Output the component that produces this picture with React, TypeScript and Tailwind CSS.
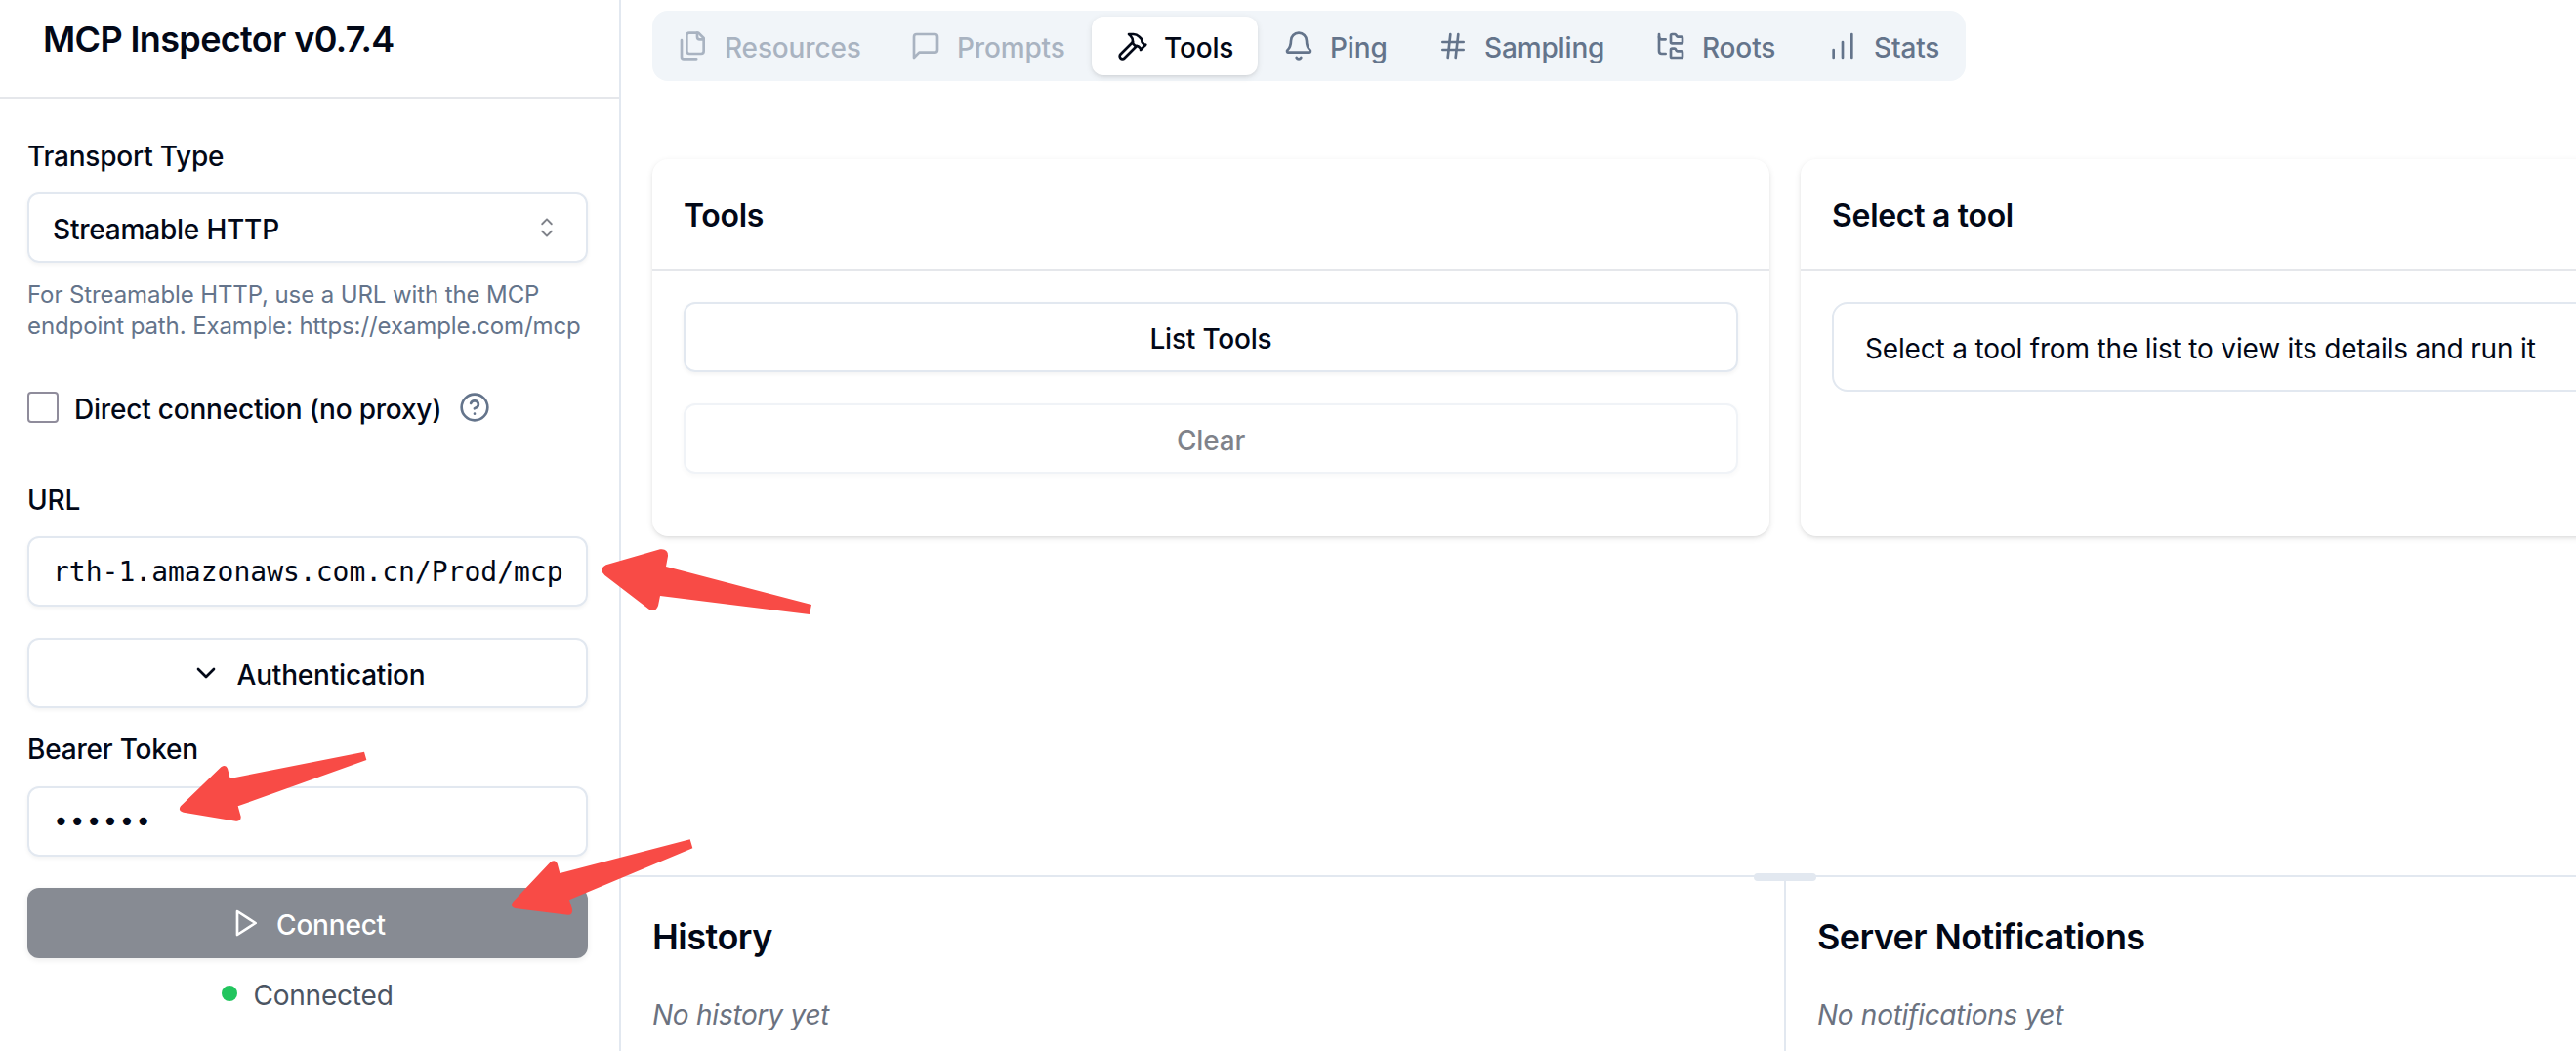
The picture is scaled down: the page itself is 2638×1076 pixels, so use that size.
import type { ReactNode } from 'react';
import {
  Bell,
  ChartNoAxesColumnIncreasing,
  ChevronDown,
  CircleHelp,
  FolderTree,
  Hammer,
  Hash,
} from 'lucide-react';

const stroke = {
  viewBox: '0 0 24 24',
  fill: 'none',
  stroke: 'currentColor',
  strokeWidth: 2,
  strokeLinecap: 'round' as const,
  strokeLinejoin: 'round' as const,
};

function FilesIcon() {
  return (
    <svg {...stroke} className="size-8 shrink-0">
      <path d="M20 7h-3a2 2 0 0 1-2-2V2" />
      <path d="M9 18a2 2 0 0 1-2-2V4a2 2 0 0 1 2-2h7l4 4v10a2 2 0 0 1-2 2Z" />
      <path d="M3 7.6v12.8A1.6 1.6 0 0 0 4.6 22h9.8" />
    </svg>
  );
}

function MessageIcon() {
  return (
    <svg {...stroke} className="size-8 shrink-0">
      <path d="M21 15a2 2 0 0 1-2 2H7l-4 4V5a2 2 0 0 1 2-2h14a2 2 0 0 1 2 2z" />
    </svg>
  );
}

function PlayIcon() {
  return (
    <svg {...stroke} className="size-8 shrink-0">
      <polygon points="6 3 20 12 6 21 6 3" />
    </svg>
  );
}

function CaretSortIcon() {
  return (
    <svg viewBox="0 0 15 15" fill="currentColor" className="size-8 shrink-0 opacity-50">
      <path d="M4.93179 5.43179C4.75605 5.60753 4.75605 5.89245 4.93179 6.06819C5.10753 6.24392 5.39245 6.24392 5.56819 6.06819L7.49999 4.13638L9.43179 6.06819C9.60753 6.24392 9.89245 6.24392 10.0682 6.06819C10.2439 5.89245 10.2439 5.60753 10.0682 5.43179L7.81819 3.18179C7.73379 3.0974 7.61933 3.04999 7.49999 3.04999C7.38064 3.04999 7.26618 3.0974 7.18179 3.18179L4.93179 5.43179ZM10.0682 9.56819C10.2439 9.39245 10.2439 9.10753 10.0682 8.93179C9.89245 8.75606 9.60753 8.75606 9.43179 8.93179L7.49999 10.8636L5.56819 8.93179C5.39245 8.75606 5.10753 8.75606 4.93179 8.93179C4.75605 9.10753 4.75605 9.39245 4.93179 9.56819L7.18179 11.8182C7.35753 11.9939 7.64245 11.9939 7.81819 11.8182L10.0682 9.56819Z" />
    </svg>
  );
}

const tabs: { label: string; icon: ReactNode; className: string }[] = [
  { label: 'Resources', icon: <FilesIcon />, className: 'w-[238px] pl-6 opacity-50' },
  { label: 'Prompts', icon: <MessageIcon />, className: 'w-[210px] pl-6 opacity-50' },
  {
    label: 'Tools',
    icon: <Hammer className="size-8 shrink-0" />,
    className:
      'w-[170px] pl-[26px] rounded-xl bg-white text-[#020817] shadow-[0_2px_6px_rgba(0,0,0,0.1),0_2px_4px_-2px_rgba(0,0,0,0.1)]',
  },
  { label: 'Ping', icon: <Bell className="size-8 shrink-0" />, className: 'w-[160px] pl-[26px]' },
  { label: 'Sampling', icon: <Hash className="size-8 shrink-0" />, className: 'w-[223px] pl-6' },
  { label: 'Roots', icon: <FolderTree className="size-8 shrink-0" />, className: 'w-[176px] pl-6' },
  {
    label: 'Stats',
    icon: <ChartNoAxesColumnIncreasing className="size-8 shrink-0" />,
    className: 'w-[164px] pl-6',
  },
];

function Sidebar() {
  return (
    <aside className="flex h-full w-[636px] shrink-0 flex-col border-r-2 border-[#e2e8f0]">
      <div className="h-[101px] border-b-2 border-[#e5e7eb] pt-[12px] pl-[44px]">
        <h1 className="text-[36px] leading-[56px] font-semibold tracking-[-0.64px]">MCP Inspector v0.7.4</h1>
      </div>

      <div className="flex flex-col pt-[45px] pr-[32px] pl-[28px] text-[28px] leading-[28px] font-medium tracking-[-0.2px]">
        <label>Transport Type</label>
        <button className="mt-[23px] flex h-[72px] items-center justify-between rounded-xl border-2 border-[#e2e8f0] px-[24px] shadow-[0_2px_4px_rgba(0,0,0,0.05)]">
          <span className="pt-[3px]">Streamable HTTP</span>
          <CaretSortIcon />
        </button>
        <p className="mt-[17px] text-[24px] leading-[32px] font-normal tracking-[-0.1px] whitespace-nowrap text-[#64748b]">
          For Streamable HTTP, use a URL with the MCP
          <br />
          endpoint path. Example: https://example.com/mcp
        </p>

        <div className="mt-[51px] flex h-8 items-center">
          <span className="size-8 shrink-0 rounded-[4px] border-2 border-[#8f8c9b]" />
          <label className="ml-4 pt-[3px] whitespace-nowrap">Direct connection (no proxy)</label>
          <CircleHelp className="ml-[18px] size-8 shrink-0 text-[#64748b]" />
        </div>

        <label className="mt-[65px]">URL</label>
        <div className="mt-[23px] flex h-[72px] items-center overflow-hidden rounded-xl border-2 border-[#e2e8f0] pt-[2px] pl-[24px] font-['DejaVu_Sans_Mono',monospace] font-normal tracking-normal whitespace-nowrap shadow-[0_2px_4px_rgba(0,0,0,0.05)]">
          rth-1.amazonaws.com.cn/Prod/mcp
        </div>

        <button className="mt-8 flex h-[72px] items-center justify-center gap-4 rounded-xl border-2 border-[#e2e8f0] shadow-[0_2px_4px_rgba(0,0,0,0.05)]">
          <ChevronDown className="size-8 shrink-0" />
          <span className="pt-[3px]">Authentication</span>
        </button>

        <label className="mt-7">Bearer Token</label>
        <div className="mt-6 flex h-[72px] items-center rounded-xl border-2 border-[#e2e8f0] pt-[2px] pl-[24px] font-['DejaVu_Sans_Mono',monospace] font-normal tracking-normal shadow-[0_2px_4px_rgba(0,0,0,0.05)]">
          ••••••
        </div>

        <button className="mt-8 flex h-[72px] items-center justify-center gap-4 rounded-xl bg-[#878b93] text-white shadow-[0_2px_6px_rgba(0,0,0,0.08)]">
          <PlayIcon />
          <span className="pt-[3px]">Connect</span>
        </button>

        <div className="mt-4 flex h-10 items-center justify-center gap-4 font-normal text-[#4b5563]">
          <span className="size-4 rounded-full bg-[#22c55e]" />
          <span className="pt-[3px]">Connected</span>
        </div>
      </div>
    </aside>
  );
}

function Card({ title, children }: { title: string; children: ReactNode }) {
  return (
    <section className="h-[386px] w-[1144px] shrink-0 rounded-2xl bg-white shadow-[0_2px_6px_rgba(0,0,0,0.1),0_2px_4px_-2px_rgba(0,0,0,0.1)]">
      <div className="flex h-[114px] items-center border-b-2 border-[#e5e7eb] px-8 pt-[3px]">
        <h3 className="text-[32px] leading-[48px] font-semibold tracking-[-0.3px]">{title}</h3>
      </div>
      <div className="flex flex-col gap-8 p-8">{children}</div>
    </section>
  );
}

// Red hand-drawn style pointers laid over the interface
function Pointers() {
  return (
    <>
      <svg viewBox="0 0 720 270" className="absolute top-[550px] left-[600px] h-[90px] w-[240px]" fill="#f84b46">
        <path d="M62 85L228 37Q253 34 252 58L246 90L693 207L687 237L228 180L222 210Q214 232 194 221L58 117Q38 98 62 85Z" />
      </svg>
      <svg viewBox="0 0 660 270" className="absolute top-[760px] left-[170px] h-[90px] w-[220px]" fill="#f84b46">
        <path d="M45 196L169 76Q184 67 189 80L197 111L609 29L616 54L221 196L230 228Q231 244 215 242L54 215Q35 210 45 196Z" />
      </svg>
      <svg viewBox="0 0 630 288" className="absolute top-[850px] left-[510px] h-[96px] w-[210px]" fill="#f84b46">
        <path d="M46 220L162 97Q177 89 182 102L190 132L590 28L598 55L219 214L228 242Q231 260 215 260L52 240Q35 234 46 220Z" />
      </svg>
    </>
  );
}

export default function App() {
  return (
    <div className="relative flex h-[1076px] w-[2638px] overflow-hidden bg-white font-['Inter',sans-serif] text-[#020817]">
      <Sidebar />

      <main className="flex min-w-0 flex-1 flex-col">
        <div className="flex h-[896px] shrink-0 flex-col overflow-hidden pt-[11px] pl-8">
          <nav className="flex h-[72px] w-[1345px] items-center rounded-2xl bg-[#f1f5f9] pl-[2px] text-[#64748b]">
            {tabs.map((tab) => (
              <div
                key={tab.label}
                className={`flex h-[60px] shrink-0 items-center gap-4 text-[28px] leading-10 font-medium tracking-[-0.15px] ${tab.className}`}
              >
                {tab.icon}
                <span className="pt-[3px]">{tab.label}</span>
              </div>
            ))}
          </nav>

          <div className="mt-20 flex gap-8">
            <Card title="Tools">
              <button className="h-[72px] rounded-xl border-2 border-[#e2e8f0] pt-[3px] text-[28px] font-medium tracking-[-0.2px] shadow-[0_2px_4px_rgba(0,0,0,0.05)]">
                List Tools
              </button>
              <button className="h-[72px] rounded-xl border-2 border-[#e2e8f0] pt-[3px] text-[28px] font-medium tracking-[-0.2px] opacity-50 shadow-[0_2px_4px_rgba(0,0,0,0.05)]">
                Clear
              </button>
            </Card>
            <Card title="Select a tool">
              <div className="flex h-[92px] items-center rounded-2xl border-2 border-[#e2e8f0] pt-[3px] pl-8 text-[28px] tracking-[-0.17px]">
                Select a tool from the list to view its details and run it
              </div>
            </Card>
          </div>
        </div>

        <div className="relative flex flex-1 border-t-2 border-[#e2e8f0]">
          <span className="absolute -top-1 left-[1160px] h-2 w-16 rounded-full bg-[#e2e8f0]" />
          <section className="w-[1193px] shrink-0 border-r-2 border-[#e2e8f0] pt-[33px] pl-8">
            <h2 className="text-[36px] leading-[56px] font-semibold tracking-[-0.5px]">History</h2>
            <p className="mt-8 text-[28px] leading-10 tracking-[-0.25px] text-[#6b7280] italic">No history yet</p>
          </section>
          <section className="flex-1 pt-[33px] pl-8">
            <h2 className="text-[36px] leading-[56px] font-semibold tracking-[-0.6px]">Server Notifications</h2>
            <p className="mt-8 text-[28px] leading-10 tracking-[-0.3px] text-[#6b7280] italic">No notifications yet</p>
          </section>
        </div>
      </main>

      <Pointers />
    </div>
  );
}
